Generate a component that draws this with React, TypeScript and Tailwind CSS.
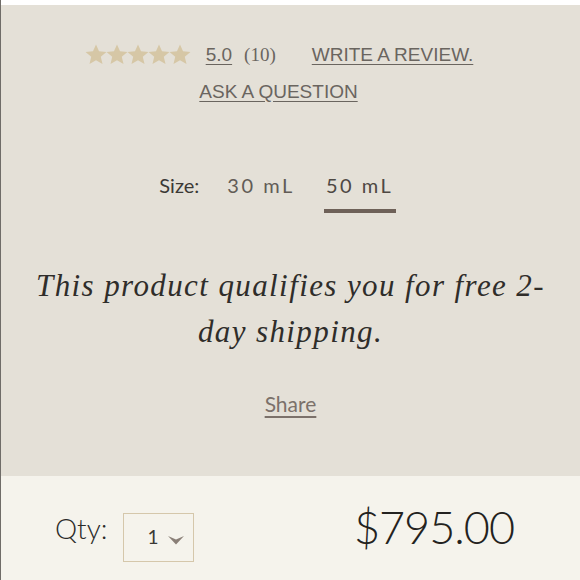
const sans = "font-['Liberation_Sans',Arial,sans-serif]"
const human = "font-['Lato',sans-serif]"

function Star() {
  return (
    <svg viewBox="0 0 24 24" className="-mx-[0.5px] h-[24px] w-[22px]" fill="#d6c7a6">
      <path d="M12 0.5l3.3 7.4 8.1.7-6.2 5.3 1.9 7.9L12 17.6l-7.1 4.2 1.9-7.9L.6 8.6l8.1-.7z" />
    </svg>
  )
}

export default function App() {
  return (
    <div className="h-[580px] w-[580px] overflow-hidden border-l border-[#6f6c68] bg-white pt-[5px]">
      <div className="flex h-[471px] flex-col items-center bg-[#e4e0d7]">
        <div className="mr-[22px] mt-[36px] flex items-center">
          <div className="flex">
            <Star />
            <Star />
            <Star />
            <Star />
            <Star />
          </div>
          <a className={`${sans} ml-[15px] text-[19px] text-[#6a655f] underline underline-offset-[3px]`}>5.0</a>
          <span className="ml-[12px] font-['Liberation_Serif',serif] text-[19px] text-[#6a655f]">(10)</span>
          <a className={`${sans} ml-[36px] text-[19px] text-[#6a655f] underline underline-offset-[3px]`}>WRITE A REVIEW.</a>
        </div>
        <a className={`${sans} mr-[24px] mt-[8px] text-[19px] text-[#6a655f] underline underline-offset-[3px]`}>ASK A QUESTION</a>

        <div className={`${human} mr-[26px] mt-[64px] flex items-start text-[20px]`}>
          <span className="text-[#3b3935]">Size:</span>
          <span className="ml-[28px] tracking-[2.5px] text-[#625c56]">30 mL</span>
          <div className="ml-[29px] flex flex-col items-center">
            <span className="tracking-[2.5px] text-[#4e4843]">50 mL</span>
            <div className="mt-[9px] h-[4px] w-[72px] bg-[#6e6158]" />
          </div>
        </div>

        <p className="mt-[50px] px-[30px] text-center font-['Liberation_Serif',serif] text-[31px] italic leading-[46px] tracking-[1.4px] text-[#2f2d2a]">
          This product qualifies you for free 2-day shipping.
        </p>

        <a className={`${human} mt-[33px] text-[21px] text-[#7b716a] underline underline-offset-[4px]`}>Share</a>
      </div>

      <div className="flex h-[104px] items-center bg-[#f5f3ec]">
        <span className={`${human} ml-[54px] text-[28px] font-light text-[#2b2a28]`}>Qty:</span>
        <div className="ml-[16px] mt-[18px] flex h-[49px] w-[71px] items-center border border-[#d5c7ab]">
          <span className={`${human} ml-[23px] text-[19px] text-[#3a3835]`}>1</span>
          <svg viewBox="0 0 16 10" className="ml-[10px] mt-[6px] h-[10px] w-[16px]" fill="#8a7f77">
            <path d="M0 1 L8 9.5 L16 1 L8 4.5 Z" />
          </svg>
        </div>
        <span className={`${human} ml-auto mr-[66px] text-[45px] font-light tracking-[-1px] text-[#232220]`}>$795.00</span>
      </div>
    </div>
  )
}
